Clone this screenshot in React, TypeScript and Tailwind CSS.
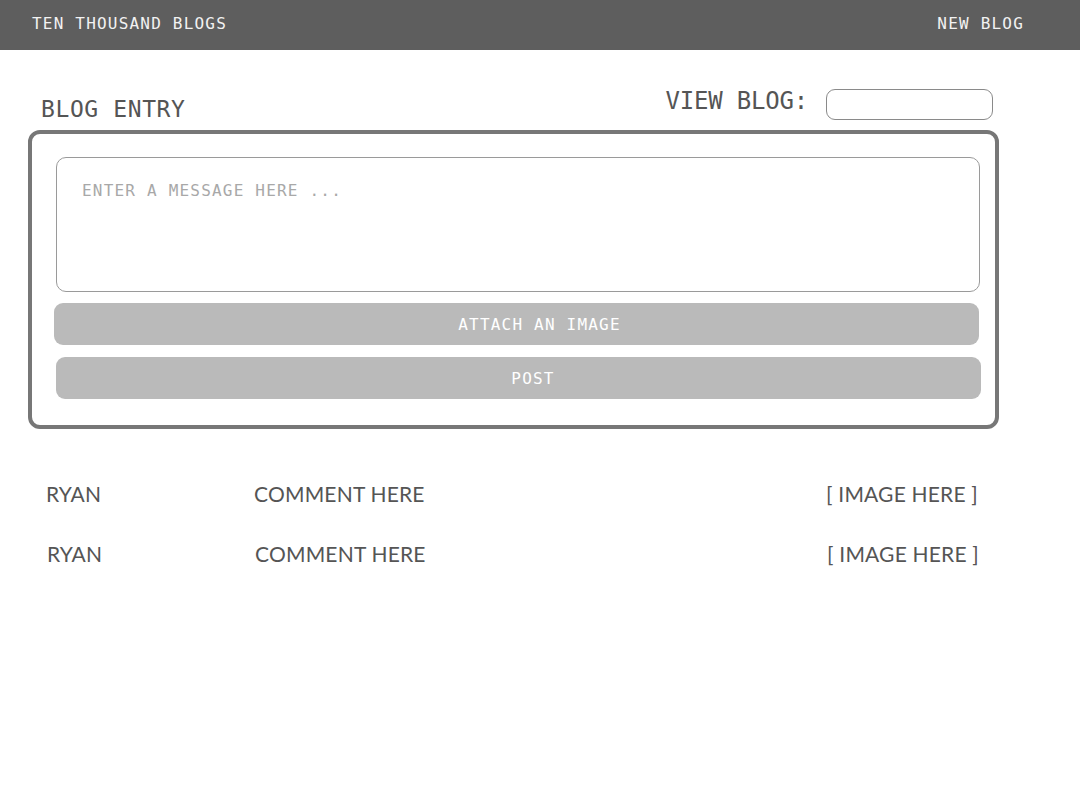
import React from "react";

const mono = { fontFamily: '"DejaVu Sans Mono", "Liberation Mono", monospace' };
const sans = { fontFamily: 'Lato, "Noto Sans", sans-serif' };

function Row({ shift }: { shift: boolean }) {
  return (
    <div
      className={`flex items-start h-[24px] leading-[24px] text-[21px] tracking-[0.2px] text-[#555555] ${shift ? "ml-[19px]" : "ml-[18px]"}`}
      style={sans}
    >
      <div className="w-[208px]">RYAN</div>
      <div className="flex-1">COMMENT HERE</div>
      <div className={shift ? "mr-[20px]" : "mr-[21px]"}>[ IMAGE HERE ]</div>
    </div>
  );
}

export default function App() {
  return (
    <div className="w-[1080px] min-h-[800px] bg-white">
      <header
        className="h-[50px] bg-[#5e5e5e] flex justify-between items-start pt-[14px] pl-[32px] pr-[56px] text-[16px] leading-[20px] tracking-[1.2px] text-[#f2f2f2]"
        style={mono}
      >
        <span>TEN THOUSAND BLOGS</span>
        <span>NEW BLOG</span>
      </header>

      <main className="ml-[28px] w-[971px] pt-[39px]">
        <div className="flex items-start h-[41px]" style={mono}>
          <div className="ml-[13px] mt-[8px] text-[23px] leading-[24px] tracking-[0.6px] text-[#555555]">
            BLOG ENTRY
          </div>
          <div className="flex-1" />
          <div className="mt-[0px] text-[24px] leading-[24px] tracking-[-0.2px] text-[#555555]">
            VIEW BLOG:
          </div>
          <div className="ml-[18px] mr-[6px] w-[167px] h-[31px] rounded-[9px] border border-[#8a8a8a] bg-white" />
        </div>

        <section className="w-[971px] h-[299px] border-[4px] border-[#777777] rounded-[12px] flex flex-col">
          <div
            className="ml-[24px] mt-[23px] w-[924px] h-[135px] border border-[#9a9a9a] rounded-[10px] pl-[25px] pt-[23px] text-[16px] leading-[20px] tracking-[1.2px] text-[#a8a8a8]"
            style={mono}
          >
            ENTER A MESSAGE HERE ...
          </div>
          <div
            className="ml-[22px] mt-[11px] w-[925px] h-[42px] rounded-[9px] bg-[#bababa] flex items-center justify-center pl-[46px] pt-[2px] text-[16px] leading-[20px] tracking-[1.2px] text-white"
            style={mono}
          >
            ATTACH AN IMAGE
          </div>
          <div
            className="ml-[24px] mt-[12px] w-[925px] h-[42px] rounded-[9px] bg-[#bababa] flex items-center justify-center pl-[29px] pt-[2px] text-[16px] leading-[20px] tracking-[1.2px] text-white"
            style={mono}
          >
            POST
          </div>
        </section>

        <div className="mt-[53px] flex flex-col gap-[36px]">
          <Row shift={false} />
          <Row shift={true} />
        </div>
      </main>
    </div>
  );
}
